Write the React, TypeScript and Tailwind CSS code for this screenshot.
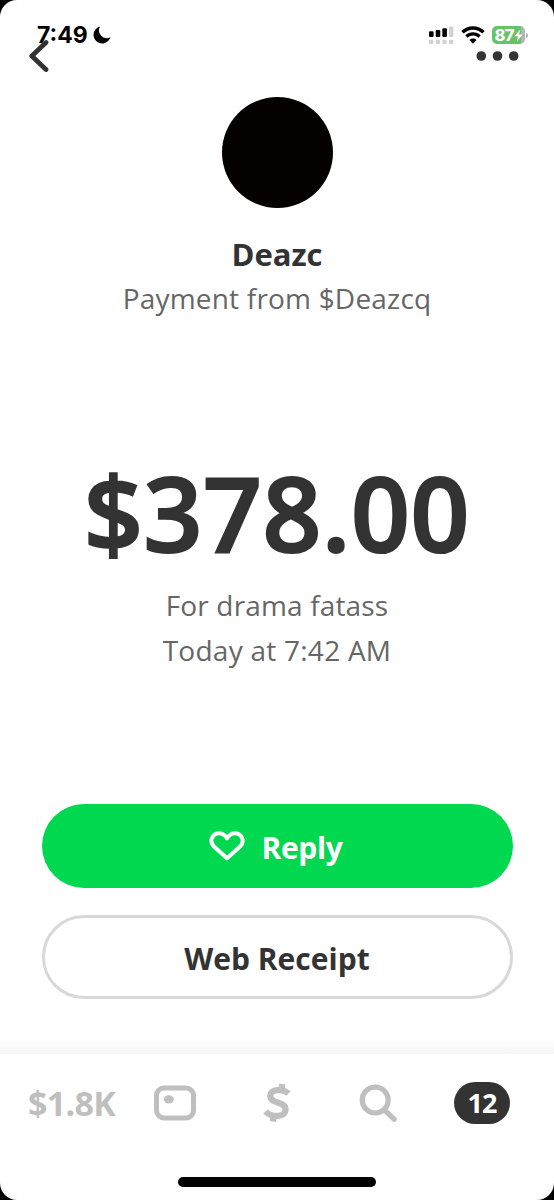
import React from 'react';

function StatusBar() {
  return (
    <div className="flex h-[70px] items-center pl-[37px] pr-[26px]">
      <span className="w-[51px] whitespace-nowrap pt-px font-['Inter',sans-serif] text-[23px] font-bold leading-none text-black">7:49</span>
      <svg className="ml-[5px]" width="18" height="18" viewBox="0 0 18 18">
        <path d="M7 0.5A8.6 8.6 0 1 0 17.4 11.2A7.8 7.8 0 0 1 7 0.5Z" fill="#000" />
      </svg>

      <svg className="ml-auto" width="25" height="18" viewBox="0 0 25 18">
        <g fill="#000">
          <rect x="0" y="5.3" width="4.6" height="5.7" rx="1.2" />
          <rect x="6.7" y="4" width="4.6" height="7" rx="1.2" />
          <rect x="13.3" y="2.3" width="4.6" height="8.7" rx="1.2" />
        </g>
        <g fill="#d1d1d1">
          <rect x="20" y="0.5" width="4.4" height="10.5" rx="1.2" />
          <rect x="0" y="13.7" width="4.4" height="4.2" rx="1.2" />
          <rect x="6.7" y="13.7" width="4.4" height="4.2" rx="1.2" />
          <rect x="13.3" y="13.7" width="4.4" height="4.2" rx="1.2" />
          <rect x="20" y="13.7" width="4.4" height="4.2" rx="1.2" />
        </g>
      </svg>
      <svg className="ml-[7px]" width="24" height="18" viewBox="0 0 24 18">
        <path d="M1.5 6.2A15 15 0 0 1 22.5 6.2" fill="none" stroke="#000" strokeWidth="3.5" />
        <path d="M5.4 10.5A9.5 9.5 0 0 1 18.6 10.5" fill="none" stroke="#000" strokeWidth="3.3" />
        <path d="M12 17.7L8.4 14A5.2 5.2 0 0 1 15.6 14Z" fill="#000" />
      </svg>
      <div className="ml-[7px] flex h-[18px] w-[33px] items-center rounded-[5px] bg-[linear-gradient(90deg,#65c466_87%,#b5b5b5_87%)] pl-[2.5px]">
        <span className="pt-px font-['Inter',sans-serif] text-[16.5px] font-extrabold leading-none tracking-[-0.6px] text-white">87</span>
        <svg className="shrink-0" width="9" height="13" viewBox="0 0 9 13">
          <path d="M6.2 0.5L0.3 7.3H4L2.8 12.5L8.7 5.5H5Z" fill="#fff" />
        </svg>
      </div>
      <div className="ml-px h-[5px] w-[2px] rounded-r-full bg-[#b5b5b5]" />
    </div>
  );
}

function Header() {
  return (
    <div className="-mt-[35px] flex h-[42px] items-center justify-between pl-[29px] pr-[35px]">
      <svg width="20" height="34" viewBox="0 0 20 34">
        <path d="M17 3.5L2.8 17L17 30.5" fill="none" stroke="#333" strokeWidth="4.8" strokeLinecap="round" strokeLinejoin="round" />
      </svg>
      <svg width="43" height="10" viewBox="0 0 43 10" fill="#333">
        <circle cx="5.3" cy="5" r="4.8" />
        <circle cx="21.5" cy="5" r="4.8" />
        <circle cx="37.7" cy="5" r="4.8" />
      </svg>
    </div>
  );
}

function TabBar() {
  return (
    <div className="flex h-[98px] items-center pl-7 text-[#bfbfbf]">
      <span className="w-[88px] whitespace-nowrap text-[34px] font-bold leading-none tracking-[-0.7px]">$1.8K</span>
      <svg className="ml-[38px]" width="42" height="36" viewBox="0 0 42 36">
        <rect x="2.5" y="3" width="37" height="30" rx="7.5" fill="none" stroke="currentColor" strokeWidth="5" />
        <ellipse cx="14.8" cy="14.3" rx="5" ry="4.1" fill="currentColor" />
      </svg>
      <svg className="ml-[66px]" width="30" height="40" viewBox="0 0 30 40">
        <path
          d="M26.5 10.5C21 5.5 8.3 5.5 8.3 13C8.3 21 23.5 18 23.5 26.5C23.5 35 9 34.5 3.5 28.5M19.5 7L20.3 1M10.8 38.5L11.8 33"
          fill="none"
          stroke="currentColor"
          strokeWidth="6.2"
        />
      </svg>
      <svg className="ml-[66px]" width="40" height="40" viewBox="0 0 40 40">
        <circle cx="17.2" cy="17" r="13" fill="none" stroke="currentColor" strokeWidth="5.2" />
        <path d="M27 27.5L36.3 36.3" stroke="currentColor" strokeWidth="5.2" strokeLinecap="round" />
      </svg>
      <div className="ml-[56px] flex h-[42px] w-[56px] items-center justify-center rounded-full bg-[#333] pb-[2px] text-[27px] font-bold leading-none tracking-[-1px] text-white">
        12
      </div>
    </div>
  );
}

export default function App() {
  return (
    <div className="h-[1200px] w-full bg-black">
      <div className="flex h-full flex-col overflow-hidden rounded-[17px] bg-white font-['Open_Sans',sans-serif] text-[#333]">
        <StatusBar />
        <Header />

        <div className="flex flex-col items-center whitespace-nowrap">
          <div className="mt-5 size-[111px] rounded-full bg-[#040100]" />
          <h1 className="mt-[26px] text-[31px] font-bold leading-10">Deazc</h1>
          <p className="mt-[4px] text-[28px] leading-10 tracking-[0.2px] text-[#666]">Payment from $Deazcq</p>
          <div className="mt-[134px] text-[103px] font-semibold leading-[120px] tracking-[0.6px] [-webkit-text-stroke:2.2px_#333]">$378.00</div>
          <p className="mt-[13px] text-[28px] leading-10 tracking-[0.15px] text-[#666]">For drama fatass</p>
          <p className="mt-[5px] text-[28px] leading-10 tracking-[0.25px] text-[#666]">Today at 7:42 AM</p>
        </div>

        <div className="mt-[134px] flex flex-col gap-[27px] px-[41.5px] text-[30px] font-bold">
          <button className="flex h-[84px] items-center justify-center rounded-full bg-[#00d94f] pr-[2px] text-white">
            <svg width="36" height="30" viewBox="0 0 36 30">
              <path
                d="M18 27.2L5.2 15.8C-1 9.8 4 2.3 10 2.3C14 2.3 16.5 5 18 7.3C19.5 5 22 2.3 26 2.3C32 2.3 37 9.8 30.8 15.8Z"
                fill="none"
                stroke="currentColor"
                strokeWidth="4"
                strokeLinejoin="round"
              />
            </svg>
            <span className="ml-[16px] pt-[2px] tracking-[-0.3px]">Reply</span>
          </button>
          <button className="h-[84px] rounded-full border-[3px] border-[#d8d8d8] pt-[2px]">Web Receipt</button>
        </div>

        <div className="mt-10 h-[15px] bg-linear-to-b from-white to-[#f5f5f5]" />
        <TabBar />
        <div className="mt-[25px] h-[10px] w-[198px] self-center rounded-full bg-black" />
      </div>
    </div>
  );
}
